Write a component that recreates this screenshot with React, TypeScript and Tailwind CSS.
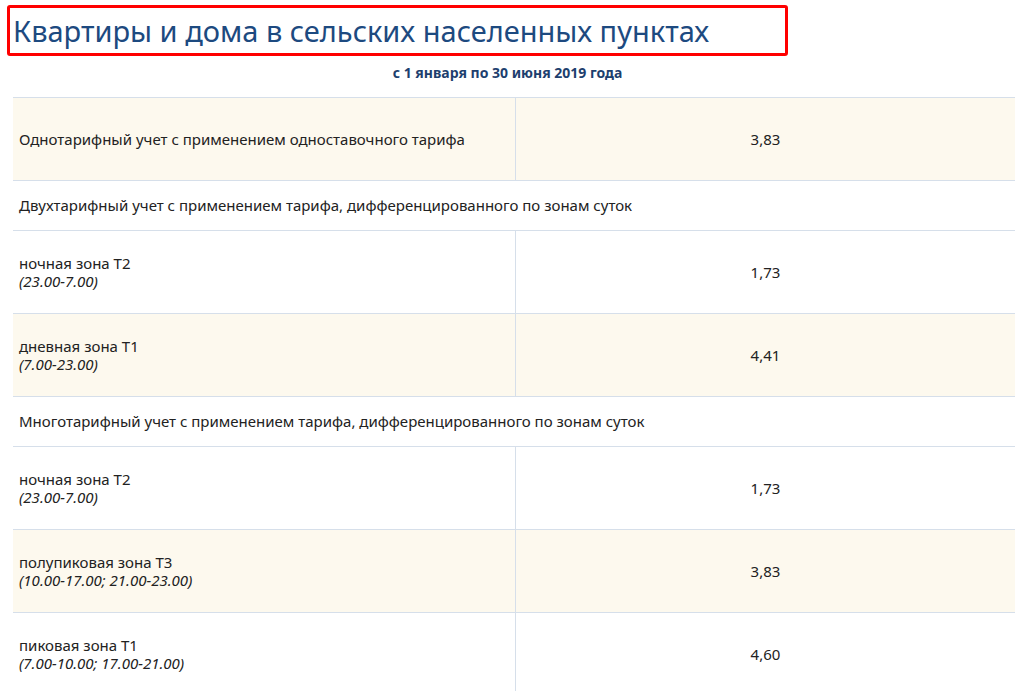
const rows: (
  | { kind: 'section'; label: string }
  | { kind: 'row'; label: string; time?: string; value: string; shaded: boolean }
)[] = [
  { kind: 'row', label: 'Однотарифный учет с применением одноставочного тарифа', value: '3,83', shaded: true },
  { kind: 'section', label: 'Двухтарифный учет с применением тарифа, дифференцированного по зонам суток' },
  { kind: 'row', label: 'ночная зона Т2', time: '(23.00-7.00)', value: '1,73', shaded: false },
  { kind: 'row', label: 'дневная зона Т1', time: '(7.00-23.00)', value: '4,41', shaded: true },
  { kind: 'section', label: 'Многотарифный учет с применением тарифа, дифференцированного по зонам суток' },
  { kind: 'row', label: 'ночная зона Т2', time: '(23.00-7.00)', value: '1,73', shaded: false },
  { kind: 'row', label: 'полупиковая зона Т3', time: '(10.00-17.00; 21.00-23.00)', value: '3,83', shaded: true },
  { kind: 'row', label: 'пиковая зона Т1', time: '(7.00-10.00; 17.00-21.00)', value: '4,60', shaded: false },
];

export default function App() {
  return (
    <div className="h-[691px] overflow-hidden bg-white font-['Liberation_Sans'] text-[15px] text-[#222]">
      <div className="pl-[7px] pt-[5px]">
        <div className="flex h-[51px] w-[781px] items-center rounded-[3px] border-[3px] border-[#ff0000] pl-[3px]">
          <h1 className="text-[29px] leading-none text-[#1d4a80]">Квартиры и дома в сельских населенных пунктах</h1>
        </div>
      </div>
      <div className="mt-[9px] text-center text-[14px] font-bold leading-[16px] text-[#1d3f6e]">с 1 января по 30 июня 2019 года</div>
      <div className="ml-[13px] mt-[16px] border-t border-[#d6dfea]">
        {rows.map((r, i) =>
          r.kind === 'section' ? (
            <div key={i} className="flex h-[50px] items-center border-b border-[#d6dfea] pl-[6px]">{r.label}</div>
          ) : (
            <div key={i} className={`flex h-[83px] border-b border-[#d6dfea] ${r.shaded ? 'bg-[#fdf9ee]' : 'bg-white'}`}>
              <div className="flex w-[503px] flex-col justify-center border-r border-[#d6dfea] pl-[6px] leading-[18px]">
                <span>{r.label}</span>
                {r.time && <span className="italic">{r.time}</span>}
              </div>
              <div className="flex flex-1 items-center justify-center">{r.value}</div>
            </div>
          )
        )}
      </div>
    </div>
  );
}
